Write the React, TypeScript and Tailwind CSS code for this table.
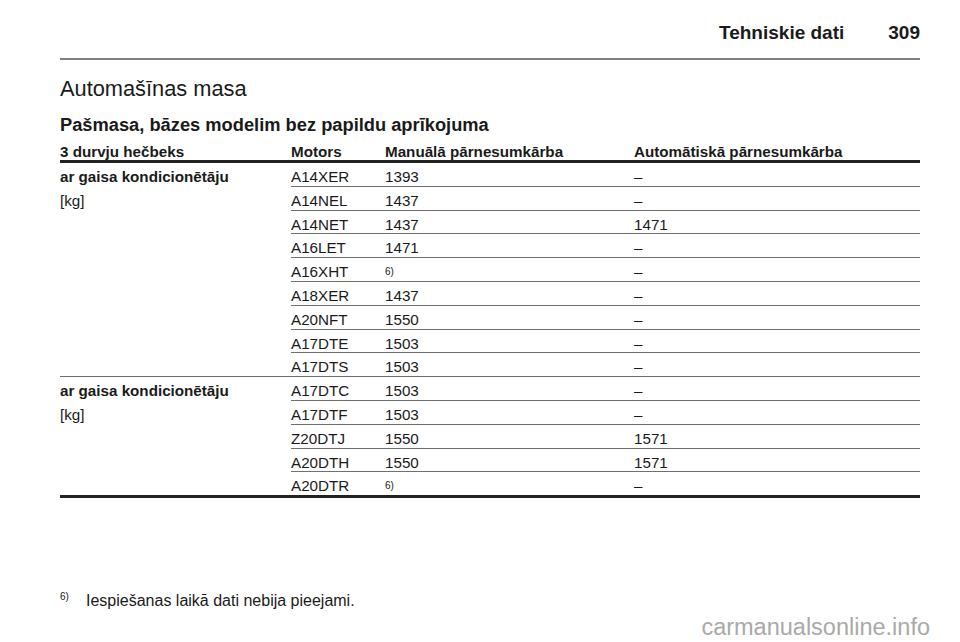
const group1 = [
  { motor: "A14XER", manual: "1393", auto: "–" },
  { motor: "A14NEL", manual: "1437", auto: "–" },
  { motor: "A14NET", manual: "1437", auto: "1471" },
  { motor: "A16LET", manual: "1471", auto: "–" },
  { motor: "A16XHT", manual: null, auto: "–" },
  { motor: "A18XER", manual: "1437", auto: "–" },
  { motor: "A20NFT", manual: "1550", auto: "–" },
  { motor: "A17DTE", manual: "1503", auto: "–" },
  { motor: "A17DTS", manual: "1503", auto: "–" },
];

const group2 = [
  { motor: "A17DTC", manual: "1503", auto: "–" },
  { motor: "A17DTF", manual: "1503", auto: "–" },
  { motor: "Z20DTJ", manual: "1550", auto: "1571" },
  { motor: "A20DTH", manual: "1550", auto: "1571" },
  { motor: "A20DTR", manual: null, auto: "–" },
];

type Row = { motor: string; manual: string | null; auto: string };

function Group({ rows, last }: { rows: Row[]; last?: boolean }) {
  return (
    <div
      className={`flex ${
        last ? "border-b-[3px] border-[#222]" : "border-b border-[#707070]"
      }`}
    >
      <div className="w-[231px] shrink-0">
        <div className="h-[23.8px] pt-[5px] leading-[17px] font-bold">
          ar gaisa kondicionētāju
        </div>
        <div className="h-[23.8px] pt-[5px] leading-[17px]">[kg]</div>
      </div>
      <div className="flex-1">
        {rows.map((r, i) => (
          <div
            key={r.motor}
            className={`flex pt-[5px] leading-[17px] ${
              i < rows.length - 1
                ? "h-[23.8px] border-b border-[#707070]"
                : "h-[22.8px]"
            }`}
          >
            <div className="w-[94px]">{r.motor}</div>
            <div className="w-[249px]">
              {r.manual ?? (
                <span className="text-[10px] align-[7px]">6)</span>
              )}
            </div>
            <div className="flex-1">{r.auto}</div>
          </div>
        ))}
      </div>
    </div>
  );
}

export default function App() {
  return (
    <div
      className="w-[960px] h-[642px] bg-white text-[#1a1a1a] pl-[60px] pr-[40px] overflow-hidden"
      style={{ fontFamily: '"Liberation Sans", Arial, sans-serif' }}
    >
      <div className="flex justify-end gap-[44px] pt-[20px] text-[19px] leading-[26px] font-bold">
        <span>Tehniskie dati</span>
        <span>309</span>
      </div>
      <div className="mt-[12px] border-t-2 border-[#7f7f7f]" />

      <h1 className="mt-[17px] text-[21.8px] leading-[24px] font-normal">
        Automašīnas masa
      </h1>
      <h2 className="mt-[14px] text-[18.3px] leading-[20px] font-bold">
        Pašmasa, bāzes modelim bez papildu aprīkojuma
      </h2>

      <div className="mt-[8px] text-[15.2px]">
        <div className="flex font-bold leading-[17px] border-b-[3px] border-[#222]">
          <div className="w-[231px]">3 durvju hečbeks</div>
          <div className="w-[94px]">Motors</div>
          <div className="w-[249px]">Manuālā pārnesumkārba</div>
          <div className="flex-1">Automātiskā pārnesumkārba</div>
        </div>
        <Group rows={group1} />
        <Group rows={group2} last />
      </div>

      <div className="mt-[93px] flex text-[16px] leading-[19px]">
        <span className="w-[26px] text-[10px] leading-[12px]">6)</span>
        <span>Iespiešanas laikā dati nebija pieejami.</span>
      </div>

      <div className="mt-[4px] flex justify-end text-[23.5px] leading-[26px] text-[#a9a9a9] -mr-[10px]">
        carmanualsonline.info
      </div>
    </div>
  );
}
